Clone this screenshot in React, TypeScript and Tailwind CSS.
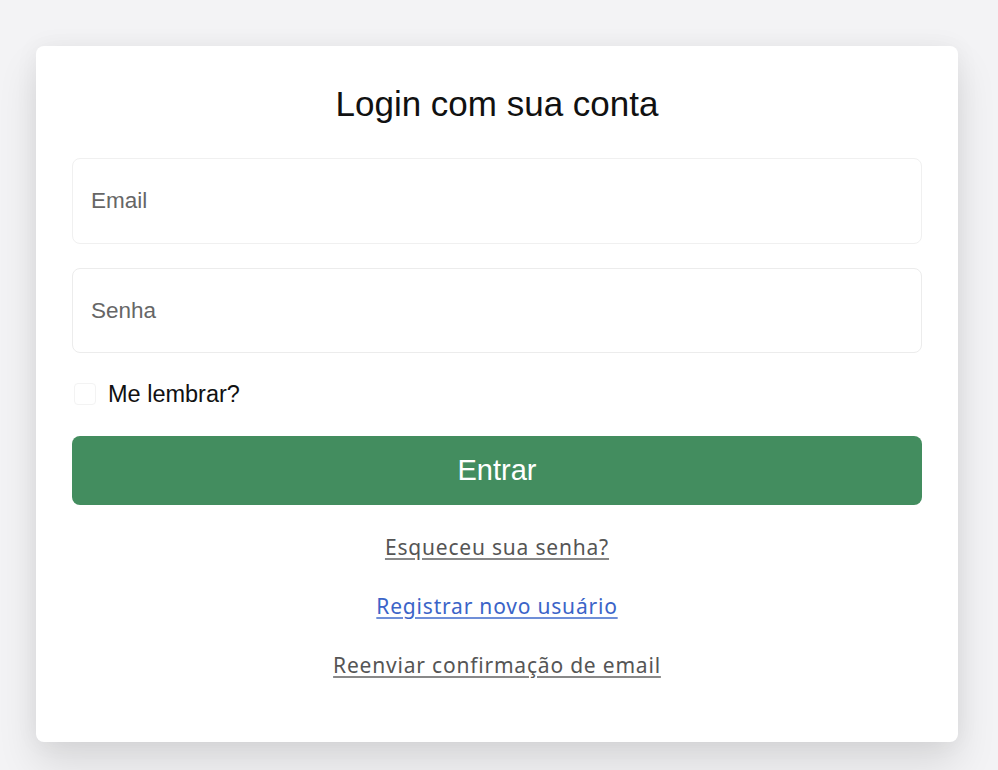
import React from "react";

export default function App() {
  return (
    <div className="min-h-[770px] w-full bg-[#f3f3f5] pl-[36px] pr-[40px] pt-[46px] pb-[28px]" style={{ fontFamily: '"Liberation Sans", Arial, sans-serif' }}>
      <div className="flex flex-col rounded-[8px] bg-white px-[36px] pt-[38px] pb-[62px] shadow-[0_22px_40px_rgba(0,0,0,0.11),0_0_24px_rgba(0,0,0,0.05)]">
        <h1 className="text-center text-[35px] leading-[40px] text-[#111]">Login com sua conta</h1>
        <div className="mt-[34px] flex h-[86px] items-center rounded-[8px] border border-[#f0f0f0] px-[18px] text-[22.5px] text-[#666]">Email</div>
        <div className="mt-[24px] flex h-[85px] items-center rounded-[8px] border border-[#ececec] px-[18px] text-[22.5px] text-[#666]">Senha</div>
        <div className="mt-[21px] flex items-center gap-[12px] pl-[2px]">
          <div className="h-[22px] w-[22px] rounded-[4px] border border-[#f3f3f3]" />
          <span className="text-[23.5px] leading-[40px] text-[#111]">Me lembrar?</span>
        </div>
        <button className="mt-[22px] h-[69px] w-full rounded-[8px] bg-[#438d5f] text-[29px] text-white">Entrar</button>
        <div className="mt-[27px] flex flex-col items-center gap-[29px] text-[21px] leading-[30px] tracking-[0.8px]" style={{ fontFamily: '"Noto Sans", sans-serif' }}>
          <a className="text-[#555] underline decoration-[#888] underline-offset-[3px]">Esqueceu sua senha?</a>
          <a className="text-[#3b64c8] underline decoration-[#6f8fd8] underline-offset-[3px]">Registrar novo usuário</a>
          <a className="text-[#555] underline decoration-[#888] underline-offset-[3px]">Reenviar confirmação de email</a>
        </div>
      </div>
    </div>
  );
}
